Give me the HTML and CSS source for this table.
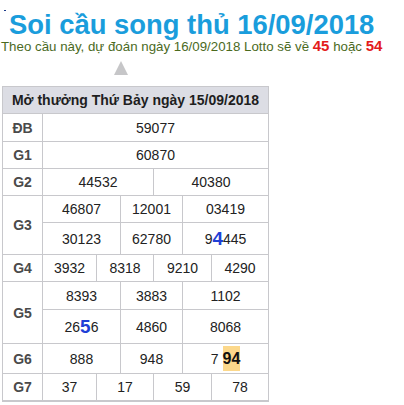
FILE: index.html
```html
<!DOCTYPE html>
<html lang="vi">
<head>
<meta charset="utf-8">
<link rel="stylesheet" href="styles.css">
</head>
<body>
<div class="page">
  <span class="mark"></span>
  <h1 class="title">Soi cầu song thủ 16/09/2018</h1>
  <p class="predict">Theo cầu này, dự đoán ngày 16/09/2018 Lotto sẽ về <b class="hot">45</b> hoặc <b class="hot">54</b></p>
  <div class="arrow"></div>
  <div class="board">
    <div class="cell head">Mở thưởng Thứ Bảy ngày 15/09/2018</div>

    <div class="cell lbl">ĐB</div>
    <div class="cell c-all">59077</div>

    <div class="cell lbl">G1</div>
    <div class="cell c-all">60870</div>

    <div class="cell lbl">G2</div>
    <div class="cell c-h1">44532</div>
    <div class="cell c-h2">40380</div>

    <div class="cell lbl r2">G3</div>
    <div class="cell c-t1">46807</div>
    <div class="cell c-t2">12001</div>
    <div class="cell c-t3">03419</div>
    <div class="cell c-t1">30123</div>
    <div class="cell c-t2">62780</div>
    <div class="cell c-t3">9<b class="big">4</b>445</div>

    <div class="cell lbl">G4</div>
    <div class="cell c-q1">3932</div>
    <div class="cell c-q2">8318</div>
    <div class="cell c-q3">9210</div>
    <div class="cell c-q4">4290</div>

    <div class="cell lbl r2">G5</div>
    <div class="cell c-t1">8393</div>
    <div class="cell c-t2">3883</div>
    <div class="cell c-t3">1102</div>
    <div class="cell c-t1">26<b class="big">5</b>6</div>
    <div class="cell c-t2">4860</div>
    <div class="cell c-t3">8068</div>

    <div class="cell lbl">G6</div>
    <div class="cell c-t1">888</div>
    <div class="cell c-t2">948</div>
    <div class="cell c-t3">7 <b class="hit">94</b></div>

    <div class="cell lbl">G7</div>
    <div class="cell c-q1">37</div>
    <div class="cell c-q2">17</div>
    <div class="cell c-q3">59</div>
    <div class="cell c-q4">78</div>
  </div>
</div>
</body>
</html>
```

FILE: styles.css
```css
html, body {
  margin: 0;
  padding: 0;
  background: #ffffff;
}

.page {
  position: relative;
  font-family: "Liberation Sans", Arial, sans-serif;
  width: 404px;
  height: 405px;
  overflow: hidden;
}

.mark {
  position: absolute;
  left: 4px;
  top: 10px;
  width: 2px;
  height: 1px;
  background: #1b3a8a;
}

.title {
  margin: 12px 0 0 0;
  padding-left: 9px;
  font-size: 27.4px;
  line-height: 26px;
  font-weight: bold;
  color: #1a9ddc;
  white-space: nowrap;
}

.predict {
  margin: 1px 0 0 0;
  padding-left: 1px;
  font-size: 13.3px;
  line-height: 16px;
  height: 16px;
  color: #4b6a1e;
  white-space: nowrap;
}

.hot {
  color: #e31b1b;
  font-size: 15px;
  line-height: 10px;
  font-weight: bold;
}

.arrow {
  width: 0;
  height: 0;
  margin: 6px 0 0 114px;
  border-left: 7.5px solid transparent;
  border-right: 7.5px solid transparent;
  border-bottom: 14px solid #c6c6c8;
}

.board {
  margin: 11px 0 0 2px;
  display: grid;
  grid-template-columns: 40px 54px 24px 33px 29px 29px 57px;
  grid-template-rows: 27px 28px 27px 27px 27px 32px 27px 28px 34px 30px 27px;
  width: 266px;
  border-left: 1px solid #c8c8cc;
  border-top: 1px solid #c8c8cc;
  border-bottom: 1px solid #c8c8cc;
  box-sizing: content-box;
}

.cell {
  box-sizing: border-box;
  border-right: 1px solid #c8c8cc;
  border-bottom: 1px solid #c8c8cc;
  display: flex;
  align-items: center;
  justify-content: center;
  font-size: 14px;
  color: #222222;
  white-space: nowrap;
}

.head {
  grid-column: 1 / 8;
  background: #dcdde4;
  font-weight: bold;
  font-size: 14px;
  color: #1e1e1e;
}

.lbl {
  grid-column: 1 / 2;
  font-weight: bold;
  color: #4a4a4a;
}

.r2 { grid-row: span 2; }

.c-all { grid-column: 2 / 8; }
.c-h1 { grid-column: 2 / 5; }
.c-h2 { grid-column: 5 / 8; }
.c-t1 { grid-column: 2 / 4; }
.c-t2 { grid-column: 4 / 6; }
.c-t3 { grid-column: 6 / 8; }
.c-q1 { grid-column: 2 / 3; }
.c-q2 { grid-column: 3 / 5; }
.c-q3 { grid-column: 5 / 7; }
.c-q4 { grid-column: 7 / 8; }

.big {
  color: #1f3fd6;
  font-size: 19px;
  font-weight: bold;
}

.hit {
  display: inline-block;
  margin-left: 4px;
  background: #fcd88b;
  font-size: 16px;
  line-height: 25px;
  font-weight: bold;
  color: #111111;
}
```
